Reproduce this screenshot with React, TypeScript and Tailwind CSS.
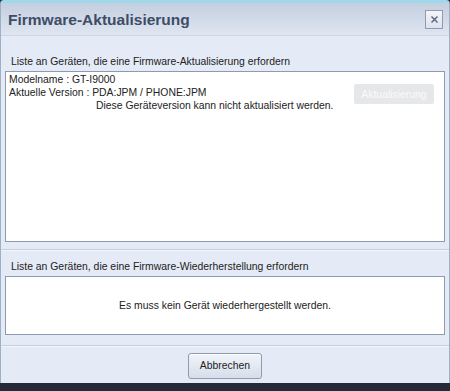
import React from 'react';

const CLASS_NAMES: Record<string, string> = {
  label: 'h-[14px] pl-[6px] text-[10.4px] leading-[14px] text-[#222222] whitespace-nowrap',
  box: 'bg-white border border-[#8d9bb0]',
  separator: 'border-t border-[#c4cedc] border-b border-b-[#f4f7fc]',
};

const App = (): React.JSX.Element => {
  return (
    <div
      className="w-[450px] h-[391px] bg-[#242a36] flex flex-col"
      style={{ fontFamily: '"Liberation Sans", Arial, sans-serif' }}
    >
      <div className="h-[383px] flex flex-col rounded-t-[4px] border-t-[3px] border-[#9ed8ea] border-x border-x-[#9fb0c6] bg-[#e5ebf6] overflow-hidden">
        {/* title bar */}
        <div className="h-[33px] shrink-0 flex items-center justify-between pl-[7px] pr-[6px] bg-gradient-to-b from-[#c3cedf] to-[#dfe6f1] border-b border-[#cdd6e4]">
          <span className="pt-[1px] text-[15.5px] font-bold text-[#3e4c66] leading-none">Firmware-Aktualisierung</span>
          <button className="w-[18px] h-[19px] flex items-center justify-center border border-[#8e9bb0] bg-gradient-to-b from-[#f3f5f9] to-[#dde3ed]">
            <svg width="9" height="9" viewBox="0 0 9 9">
              <path d="M1.5 1.5 L7.5 7.5 M7.5 1.5 L1.5 7.5" stroke="#56627a" strokeWidth="1.4" />
            </svg>
          </button>
        </div>

        {/* update list */}
        <div className="px-[4px] pt-[19px] pb-[7px]">
          <div className={CLASS_NAMES.label}>Liste an Geräten, die eine Firmware-Aktualisierung erfordern</div>
          <div className={`${CLASS_NAMES.box} mt-[2px] h-[171px] px-[3px] pt-[1px] text-[10.4px] leading-[13px] text-[#222222] flex justify-between`}>
            <div className="flex flex-col flex-1 min-w-0 whitespace-nowrap">
              <div>Modelname : GT-I9000</div>
              <div>Aktuelle Version : PDA:JPM / PHONE:JPM</div>
              <div className="pl-[87px]">Diese Geräteversion kann nicht aktualisiert werden.</div>
            </div>
            <button
              disabled
              className="shrink-0 mt-[11px] mr-[7px] w-[80px] h-[20px] rounded-[2px] bg-[#e6e7e9] text-[10.4px] text-[#fbfbfb]"
            >
              Aktualisierung
            </button>
          </div>
        </div>

        <div className={CLASS_NAMES.separator} />

        {/* restore list */}
        <div className="px-[4px] pt-[9px] pb-[10px]">
          <div className={CLASS_NAMES.label}>Liste an Geräten, die eine Firmware-Wiederherstellung erfordern</div>
          <div className={`${CLASS_NAMES.box} mt-[2px] h-[59px] flex items-center justify-center text-[10.4px] text-[#222222]`}>
            Es muss kein Gerät wiederhergestellt werden.
          </div>
        </div>

        <div className={CLASS_NAMES.separator} />

        <div className="flex justify-center pt-[6px]">
          <button className="w-[74px] h-[26px] rounded-[3px] border border-[#8e9bb0] bg-gradient-to-b from-[#f1f4f9] to-[#d6deea] text-[10.4px] text-[#222222] shadow-[inset_0_1px_0_#ffffff]">
            Abbrechen
          </button>
        </div>
      </div>
    </div>
  );
};

export default App;
